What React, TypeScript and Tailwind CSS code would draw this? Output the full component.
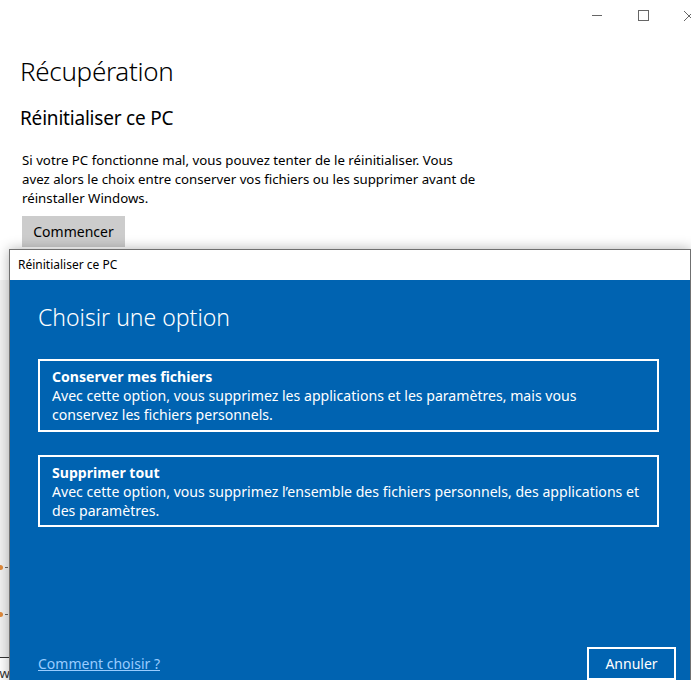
import React from "react";

export default function App() {
  const font = { fontFamily: '"Noto Sans", "Open Sans", sans-serif' };
  return (
    <div className="relative w-[691px] h-[680px] overflow-hidden bg-white text-black" style={font}>
      {/* window controls */}
      <div className="absolute top-0 right-0 flex h-[31px] items-center">
        <div className="flex w-[46px] justify-center">
          <div className="h-px w-[10px] bg-[#666]" />
        </div>
        <div className="flex w-[46px] justify-center">
          <div className="h-[11px] w-[11px] border border-[#666]" />
        </div>
        <div className="flex w-[25px] justify-start overflow-hidden">
          <svg width="10" height="10" viewBox="0 0 10 10" className="ml-[18px] shrink-0">
            <path d="M0 0 L10 10 M10 0 L0 10" stroke="#666" strokeWidth="1" />
          </svg>
        </div>
      </div>

      {/* page */}
      <div className="flex flex-col pl-[20px] pt-[52px]">
        <h1 className="text-[26px] font-light leading-[38px] tracking-[-0.3px]">Récupération</h1>
        <h2 className="mt-[14px] text-[19px] leading-[28px] tracking-[-0.2px]">Réinitialiser ce PC</h2>
        <p className="ml-[2px] mt-[19px] w-[480px] text-[13.25px] leading-[19px]">
          Si votre PC fonctionne mal, vous pouvez tenter de le réinitialiser. Vous
          <br />
          avez alors le choix entre conserver vos fichiers ou les supprimer avant de
          <br />
          réinstaller Windows.
        </p>
        <button className="ml-[2px] mt-[8px] h-[31px] w-[103px] bg-[#cccccc] text-[14px] leading-[31px]">Commencer</button>
      </div>

      {/* background content at left edge (behind the dialog) */}
      <div className="absolute left-0 top-[280px] h-[377px] w-[9px] bg-[#f1f1f1]" />
      <div className="absolute left-[-2px] top-[565px] h-[5px] w-[5px] rounded-full bg-[#e08a3c]" />
      <div className="absolute left-[5px] top-[567px] h-px w-[3px] bg-[#666]" />
      <div className="absolute left-[-2px] top-[612px] h-[5px] w-[5px] rounded-full bg-[#e08a3c]" />
      <div className="absolute left-[5px] top-[614px] h-px w-[3px] bg-[#666]" />
      <div className="absolute left-0 top-[657px] h-px w-[9px] bg-[#333]" />
      <div className="absolute left-[-8px] top-[664px] text-[13px] text-[#333]">ow</div>

      {/* dialog */}
      <div className="absolute left-[9px] top-[249px] flex h-[450px] w-[682px] flex-col border border-[#707070] bg-white shadow-[0_0_12px_rgba(0,0,0,0.3)]">
        <div className="flex h-[30px] items-center pl-[8px] text-[12px]">Réinitialiser ce PC</div>
        <div className="flex flex-1 flex-col bg-[#0063b1] px-[28px] text-white">
          <h3 className="mt-[21px] text-[23px] font-light leading-[32px]">Choisir une option</h3>
          <div className="mt-[26px] flex h-[73px] w-[621px] flex-col border-2 border-white px-[12px] pt-[6px] text-[14.1px] leading-[19px]">
            <div className="font-bold">Conserver mes fichiers</div>
            <div>
              Avec cette option, vous supprimez les applications et les paramètres, mais vous
              <br />
              conservez les fichiers personnels.
            </div>
          </div>
          <div className="mt-[23px] flex h-[72px] w-[621px] flex-col border-2 border-white px-[12px] pt-[6px] text-[14.1px] leading-[19px]">
            <div className="font-bold">Supprimer tout</div>
            <div>
              Avec cette option, vous supprimez l’ensemble des fichiers personnels, des applications et
              <br />
              des paramètres.
            </div>
          </div>
          <div className="mt-[120px] flex items-start justify-between">
            <a className="mt-[6px] text-[14px] text-[#99ccff] underline">Comment choisir ?</a>
            <button className="mr-[-14px] h-[33px] w-[89px] border-2 border-white text-[14px]">Annuler</button>
          </div>
        </div>
      </div>
    </div>
  );
}
